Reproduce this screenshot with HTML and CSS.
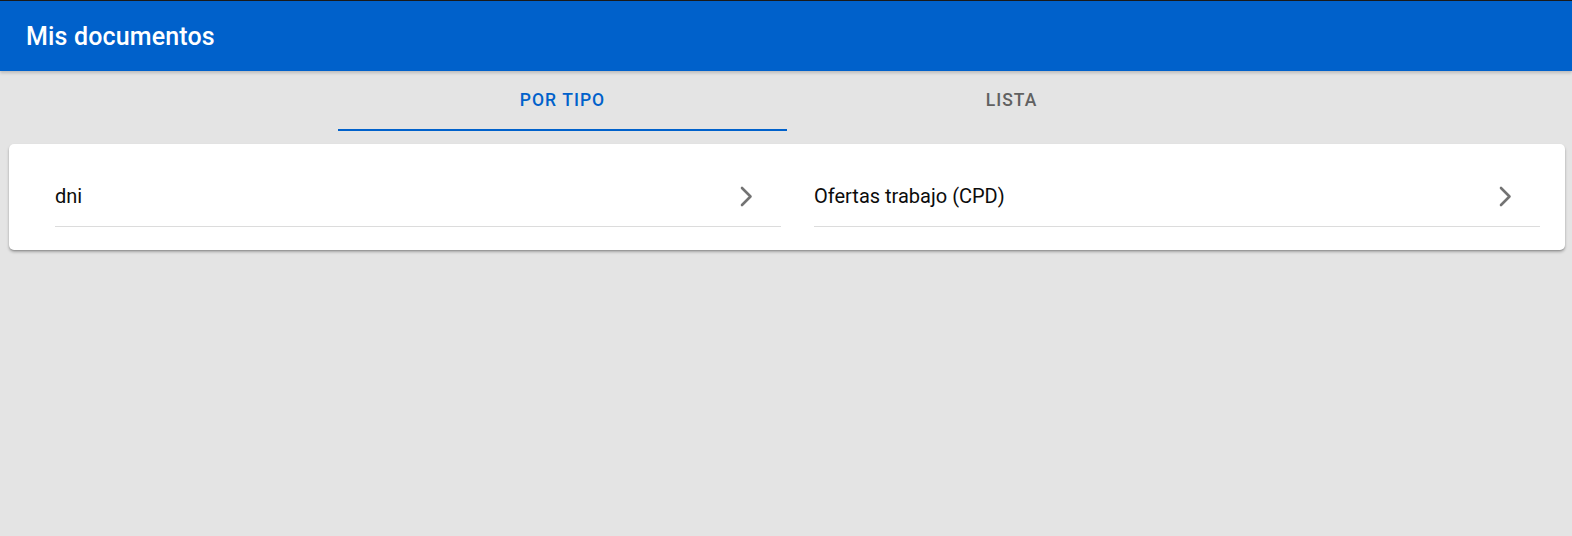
FILE: index.html
```html
<!DOCTYPE html>
<html lang="es">
<head>
<meta charset="utf-8">
<title>Mis documentos</title>
<link rel="stylesheet" href="styles.css">
</head>
<body>
<header class="toolbar">
  <h1 class="title">Mis documentos</h1>
</header>
<nav class="segment">
  <div class="segment-inner">
    <button class="seg-btn active">Por tipo</button>
    <button class="seg-btn">Lista</button>
  </div>
</nav>
<main class="content">
  <section class="card">
    <div class="item">
      <span class="label">dni</span>
      <svg class="chev" width="13" height="21" viewBox="0 0 13 21"><polyline points="2,2 10.5,10.5 2,19" fill="none" stroke="#737373" stroke-width="2.6" stroke-linecap="round" stroke-linejoin="round"/></svg>
    </div>
    <div class="item">
      <span class="label">Ofertas trabajo (CPD)</span>
      <svg class="chev" width="13" height="21" viewBox="0 0 13 21"><polyline points="2,2 10.5,10.5 2,19" fill="none" stroke="#737373" stroke-width="2.6" stroke-linecap="round" stroke-linejoin="round"/></svg>
    </div>
  </section>
</main>
</body>
</html>
```
FILE: styles.css
```css
* { box-sizing: border-box; }
html, body {
  margin: 0;
  padding: 0;
  height: 100%;
}
body {
  background: #e4e4e4;
  font-family: Roboto, "Liberation Sans", Arial, sans-serif;
  border-top: 1px solid #1a1a1a;
}
.toolbar {
  height: 70px;
  background: #0061cb;
  display: flex;
  align-items: center;
  padding: 0 26px;
  box-shadow: 0 2px 3px rgba(0,0,0,0.18);
  position: relative;
  z-index: 1;
}
.title {
  margin: 0;
  color: #ffffff;
  font-size: 25px;
  font-weight: 500;
  letter-spacing: 0.15px;
}
.segment {
  display: flex;
  justify-content: center;
  height: 60px;
}
.segment-inner {
  display: grid;
  grid-template-columns: 449px 449px;
  margin-left: 2px;
}
.seg-btn {
  background: none;
  border: none;
  border-bottom: 2px solid transparent;
  font-family: inherit;
  font-size: 17.5px;
  font-weight: 500;
  letter-spacing: 1.05px;
  text-transform: uppercase;
  color: #616161;
  padding: 0 0 1px 0;
  height: 60px;
  margin: 0;
  cursor: pointer;
}
.seg-btn.active {
  color: #0061cb;
  border-bottom-color: #0061cb;
}
.content {
  padding: 13px 7px 0 9px;
}
.card {
  background: #ffffff;
  border-radius: 5px;
  box-shadow: 0 2px 3px rgba(0,0,0,0.28), 0 1px 1px rgba(0,0,0,0.12);
  display: grid;
  grid-template-columns: 1fr 1fr;
  column-gap: 33px;
  padding: 22px 25px 23px 46px;
}
.item {
  height: 61px;
  display: flex;
  align-items: center;
  justify-content: space-between;
  border-bottom: 1px solid #dcdcdc;
  padding-right: 28px;
}
.label {
  font-size: 20px;
  color: #0c0c0c;
}
.chev {
  display: block;
}
```
